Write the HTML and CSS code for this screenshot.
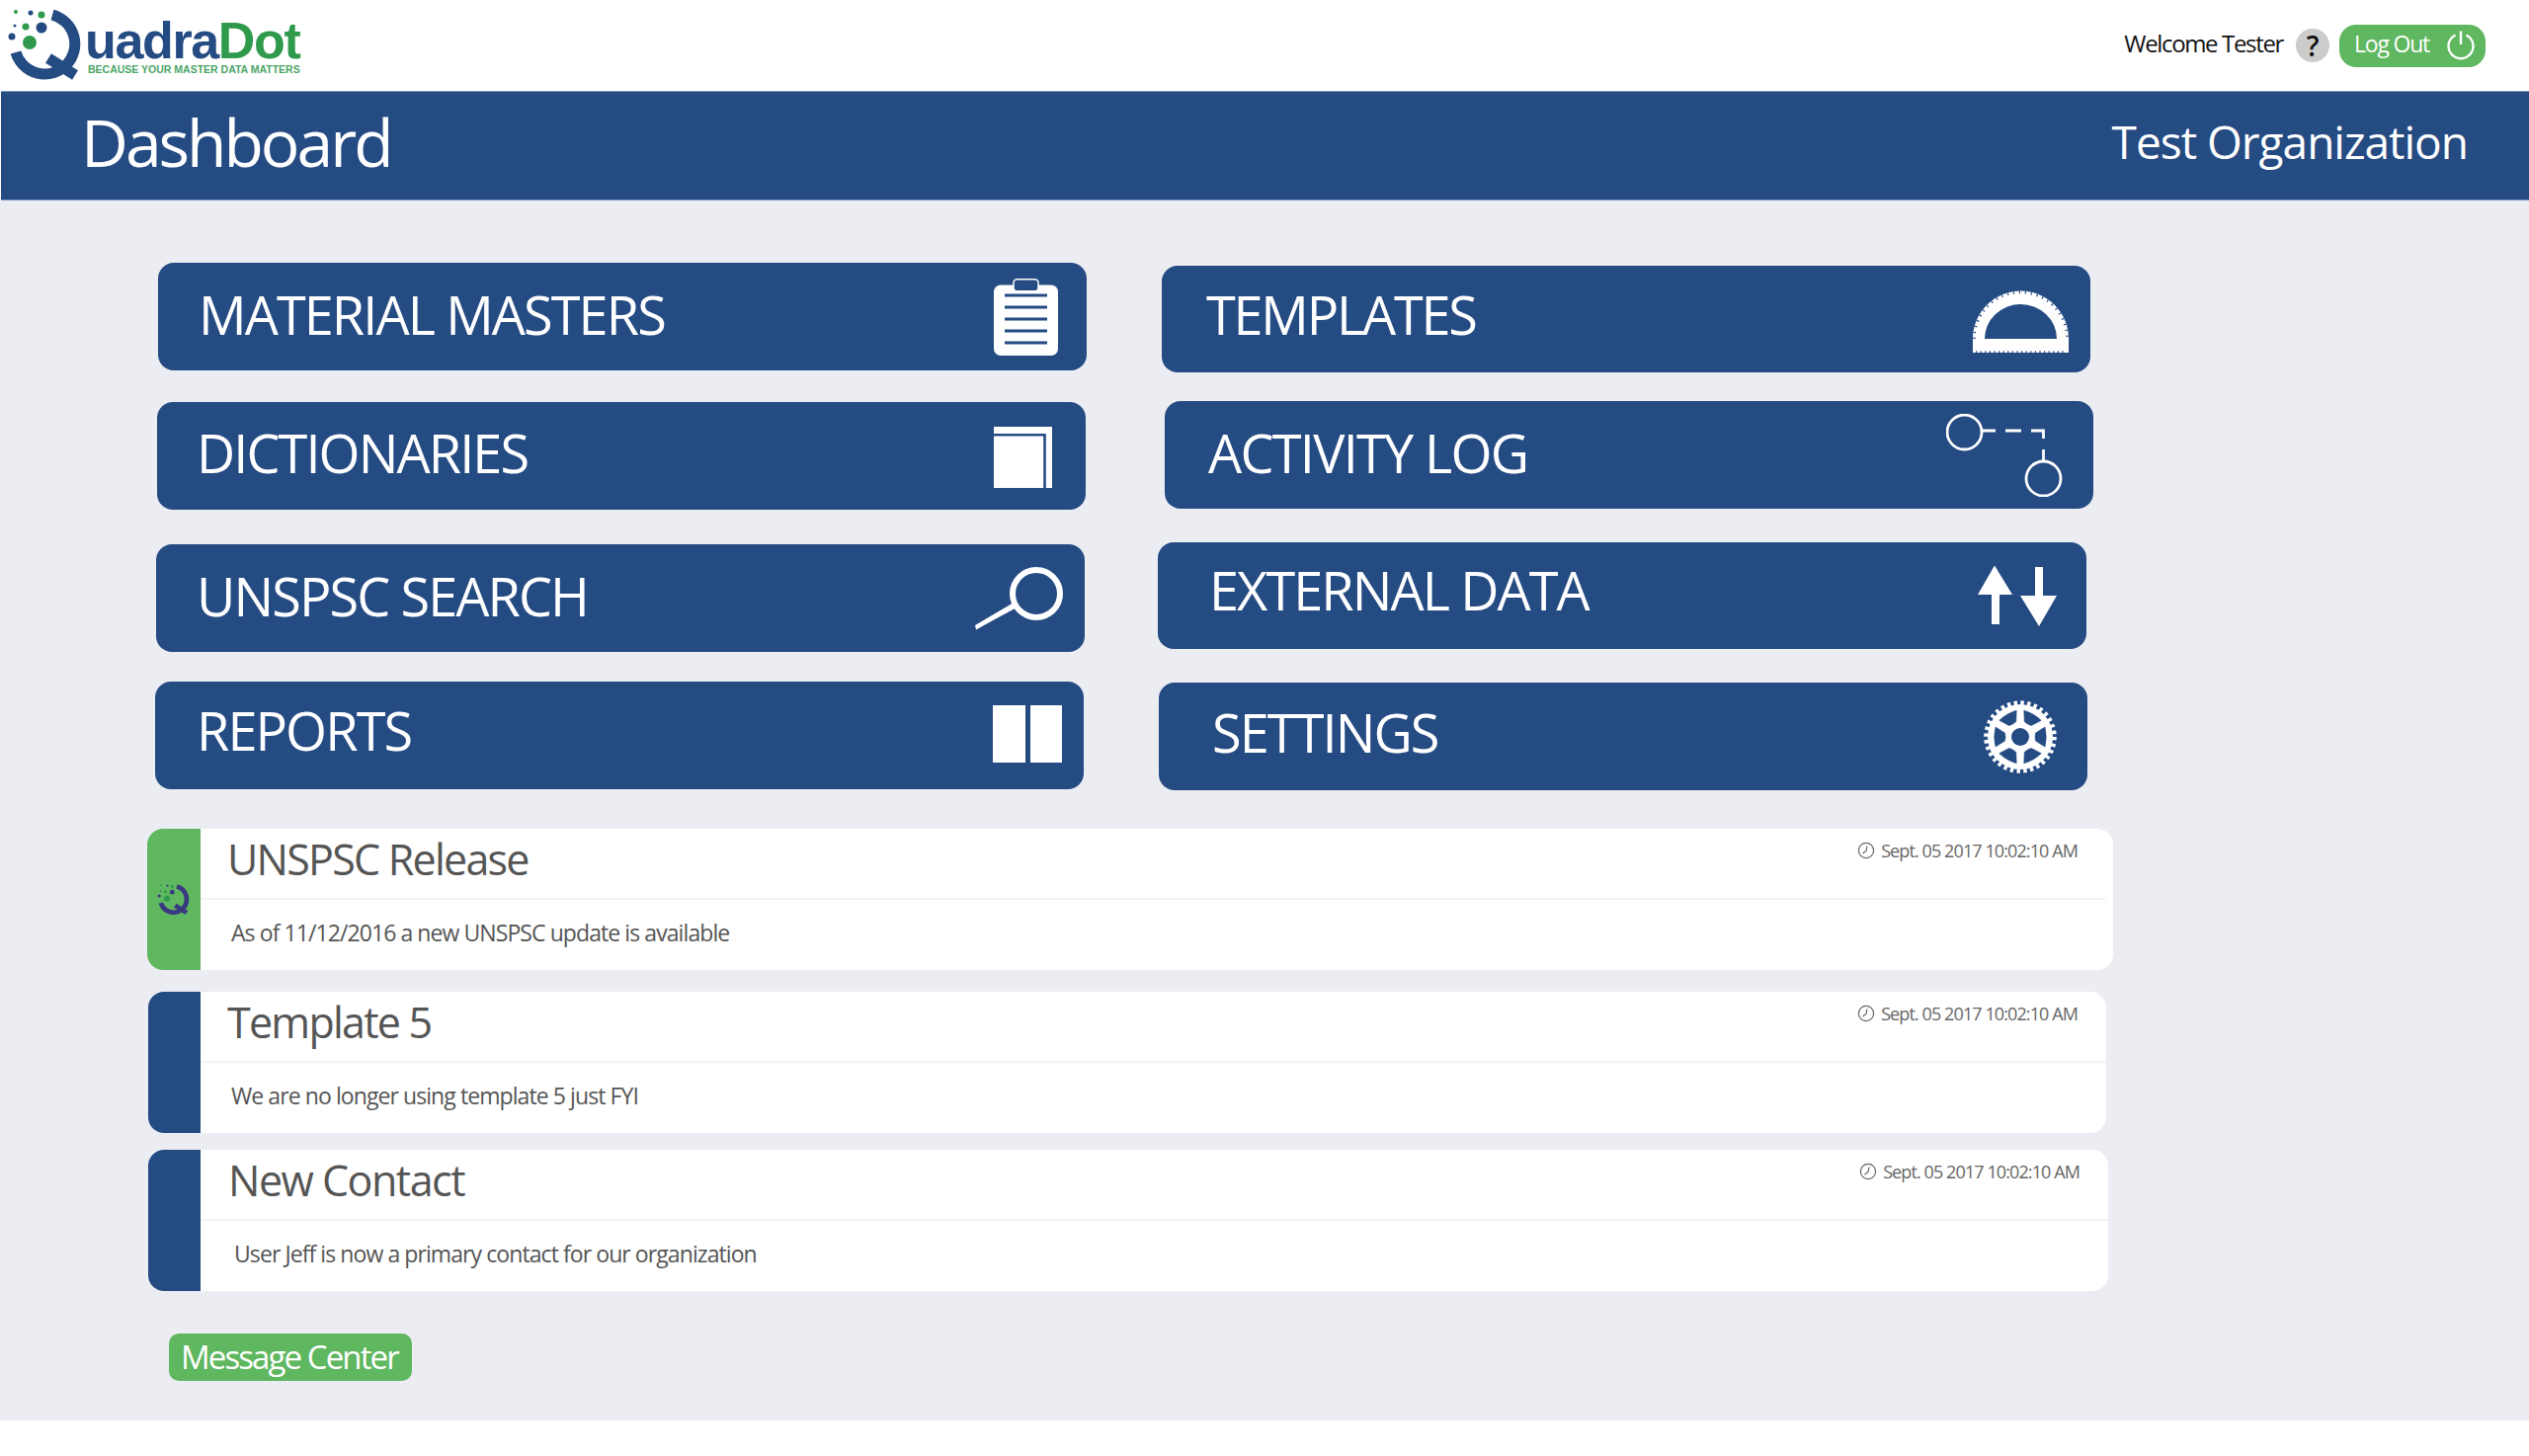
FILE: index.html
```html
<!DOCTYPE html>
<html lang="en">
<head>
<meta charset="utf-8">
<title>Dashboard</title>
<link rel="stylesheet" href="styles.css">
</head>
<body>
<svg class="defs" width="0" height="0" aria-hidden="true">
  <defs>
    <symbol id="q-mark" viewBox="0 0 92 92">
      <path class="q-ring" d="M53 15 A30.5 30.5 0 1 1 16 53"/>
      <path class="q-ring" d="M49 59 L76 76"/>
      <circle class="q-a" cx="30" cy="43" r="7"/><circle class="q-b" cx="42" cy="28" r="5.5"/>
      <circle class="q-a" cx="26" cy="27" r="3.5"/><circle class="q-b" cx="12" cy="37" r="3.5"/>
      <circle class="q-a" cx="42" cy="15" r="3.5"/><circle class="q-b" cx="31" cy="13" r="2.5"/>
      <circle class="q-a" cx="16" cy="12" r="2"/><circle class="q-b" cx="15" cy="26" r="1.5"/>
    </symbol>
    <symbol id="clock" viewBox="0 0 18 18">
      <circle cx="9" cy="9" r="7.6" fill="none" stroke="#666" stroke-width="1.2"/>
      <path d="M10 4.5 L9 9.5 L5.5 12" fill="none" stroke="#666" stroke-width="1.2"/>
    </symbol>
  </defs>
</svg>

<header class="topbar">
  <div class="logo">
    <svg class="logo-mark" viewBox="0 0 92 92"><use href="#q-mark"/></svg>
    <div class="logo-words">
      <div class="logo-name"><span class="logo-blue">uadra</span><span class="logo-green">Dot</span></div>
      <div class="logo-tag">BECAUSE YOUR MASTER DATA MATTERS</div>
    </div>
  </div>
  <div class="userbar">
    <span class="welcome">Welcome Tester</span>
    <span class="help">?</span>
    <a class="logout"><span class="logout-text">Log Out</span>
      <svg class="power" viewBox="0 0 28 30"><path d="M8.500 4.500 A12.500 12.500 0 1 0 19.500 4.500" fill="none" stroke="#fff" stroke-width="2.400"/><path d="M14 0.500 V14" stroke="#fff" stroke-width="2.400"/></svg>
    </a>
  </div>
</header>

<div class="band">
  <h1 class="band-title">Dashboard</h1>
  <div class="band-org">Test Organization</div>
</div>

<main class="content">
  <section class="tiles">
    <div class="tile-col tile-col-left">
      <a class="tile t-material"><span class="tile-label">MATERIAL MASTERS</span>
        <svg class="ico ico-clip" viewBox="0 0 65 78">
          <rect x="0" y="6.500" width="65" height="71.500" rx="7" fill="#fff"/>
          <rect x="20" y="0.800" width="25" height="12" rx="3.500" fill="#254b83" stroke="#fff" stroke-width="1.500"/>
          <path d="M11 17H54M11 29H54M11 41H54M11 53H54M11 65H54" stroke="#254b83" stroke-width="3"/>
        </svg></a>
      <a class="tile t-dict"><span class="tile-label">DICTIONARIES</span>
        <svg class="ico ico-book" viewBox="0 0 59 62">
          <rect width="59" height="62" fill="#fff"/>
          <path d="M0 8.300H51.500V62" fill="none" stroke="#254b83" stroke-width="2.600"/>
        </svg></a>
      <a class="tile t-search"><span class="tile-label">UNSPSC SEARCH</span>
        <svg class="ico ico-search" viewBox="0 0 89 64">
          <circle cx="62" cy="27" r="24" fill="none" stroke="#fff" stroke-width="6"/>
          <path d="M0 59 L39 36 L42 41 L1 63.500Z" fill="#fff"/>
        </svg></a>
      <a class="tile t-reports"><span class="tile-label">REPORTS</span>
        <svg class="ico ico-report" viewBox="0 0 70 58">
          <rect width="33" height="58" fill="#fff"/><rect x="38" width="32" height="58" fill="#fff"/>
        </svg></a>
    </div>
    <div class="tile-col tile-col-right">
      <a class="tile t-templates"><span class="tile-label">TEMPLATES</span>
        <svg class="ico ico-prot" viewBox="0 0 97 63">
          <path d="M0 63V49A48.500 48.500 0 0 1 97 49V63ZM12 49H85A36.500 35 0 0 0 12 49Z" fill="#fff" fill-rule="evenodd"/>
          <path d="M3 62.500H95" stroke="#254b83" stroke-width="2.500" stroke-dasharray="1.200 3.400"/>
          <path d="M1.500 49A47 47 0 0 1 95.500 49" fill="none" stroke="#254b83" stroke-width="2.500" stroke-dasharray="1.200 4.800"/>
        </svg></a>
      <a class="tile t-activity"><span class="tile-label">ACTIVITY LOG</span>
        <svg class="ico ico-flow" viewBox="0 0 118 84">
          <g fill="none" stroke="#fff" stroke-width="2.800">
            <circle cx="18.500" cy="18.500" r="17.500"/><circle cx="98.500" cy="65.500" r="17.500"/>
            <path d="M37 17H50M60 17H76M86 17H98.500V25M98.500 36V48"/>
          </g>
        </svg></a>
      <a class="tile t-external"><span class="tile-label">EXTERNAL DATA</span>
        <svg class="ico ico-arrows" viewBox="0 0 80 62">
          <path d="M17 0.500L35 30H22V60H14V30H0Z" fill="#fff"/>
          <path d="M62 62L43 31H58V2H66V31H80Z" fill="#fff"/>
        </svg></a>
      <a class="tile t-settings"><span class="tile-label">SETTINGS</span>
        <svg class="ico ico-gear" viewBox="-37 -37 74 74">
          <defs><path id="gear-hole" d="M15.500 -4 L25 -10 Q27.500 0 25 10 L15.500 4 Q14.500 0 15.500 -4Z"/></defs>
          <circle r="33" fill="#fff"/>
          <circle r="34" fill="none" stroke="#fff" stroke-width="5.500" stroke-dasharray="3.340 3.340"/>
          <circle r="9" fill="#254b83"/>
          <g fill="#254b83" stroke="#254b83" stroke-width="0.600" stroke-linejoin="round">
            <use href="#gear-hole"/>
            <use href="#gear-hole" transform="rotate(60)"/>
            <use href="#gear-hole" transform="rotate(120)"/>
            <use href="#gear-hole" transform="rotate(180)"/>
            <use href="#gear-hole" transform="rotate(240)"/>
            <use href="#gear-hole" transform="rotate(300)"/>
          </g>
        </svg></a>
    </div>
  </section>

  <section class="messages">
    <article class="msg msg-one">
      <div class="msg-bar msg-bar-green"><svg class="msg-q" viewBox="0 0 92 92"><use href="#q-mark"/></svg></div>
      <div class="msg-main">
        <div class="msg-head"><h2 class="msg-title">UNSPSC Release</h2>
          <span class="msg-date"><svg class="clock" viewBox="0 0 18 18"><use href="#clock"/></svg>Sept. 05 2017 10:02:10 AM</span></div>
        <p class="msg-body">As of 11/12/2016 a new UNSPSC update is available</p>
      </div>
    </article>
    <article class="msg msg-two">
      <div class="msg-bar"></div>
      <div class="msg-main">
        <div class="msg-head"><h2 class="msg-title">Template 5</h2>
          <span class="msg-date"><svg class="clock" viewBox="0 0 18 18"><use href="#clock"/></svg>Sept. 05 2017 10:02:10 AM</span></div>
        <p class="msg-body">We are no longer using template 5 just FYI</p>
      </div>
    </article>
    <article class="msg msg-three">
      <div class="msg-bar"></div>
      <div class="msg-main">
        <div class="msg-head"><h2 class="msg-title">New Contact</h2>
          <span class="msg-date"><svg class="clock" viewBox="0 0 18 18"><use href="#clock"/></svg>Sept. 05 2017 10:02:10 AM</span></div>
        <p class="msg-body">User Jeff is now a primary contact for our organization</p>
      </div>
    </article>
  </section>

  <a class="msg-center">Message Center</a>
</main>
</body>
</html>
```

FILE: styles.css
```css
* { box-sizing: border-box; }
html, body { margin: 0; padding: 0; }
body {
  height: 1474px;
  overflow: hidden;
  background: #fff;
  font-family: "Open Sans", "Noto Sans", sans-serif;
}
.defs { display: block; height: 0; }

.q-ring { fill: none; stroke: var(--q-ring, #254b83); stroke-width: 11; }
.q-a { fill: #2f9a4c; }
.q-b { fill: var(--q-ring, #254b83); }

.topbar {
  height: 92px;
  display: flex;
  justify-content: space-between;
  align-items: center;
  padding-right: 44px;
}
.logo { display: flex; align-items: flex-start; height: 92px; }
.logo-mark { width: 92px; height: 92px; flex: none; }
.logo-words { margin-left: -6px; padding-top: 18px; }
.logo-name {
  font-family: "Liberation Sans", sans-serif;
  font-weight: 700;
  font-size: 52px;
  line-height: 46px;
  letter-spacing: -1.350px;
  white-space: nowrap;
}
.logo-blue { color: #254b83; }
.logo-green { color: #2f9a4c; }
.logo-tag {
  font-family: "Liberation Sans", sans-serif;
  font-weight: 700;
  font-size: 10.500px;
  line-height: 12px;
  color: #4aa566;
  margin: 0 0 0 3px;
  white-space: nowrap;
}
.userbar { display: flex; align-items: center; }
.welcome { font-size: 24px; color: #111; margin: 0 13px 6px 0; letter-spacing: -1.350px; }
.help {
  width: 34px; height: 34px; border-radius: 50%;
  background: #cccccc; color: #111;
  display: flex; align-items: center; justify-content: center;
  font-size: 28px; font-weight: 600; line-height: 34px;
  margin-right: 10px;
}
.logout {
  width: 148px; height: 43px; border-radius: 17px;
  background: #5fb760; color: #fff;
  display: flex; align-items: center; justify-content: space-between;
  padding: 0 11px 0 15px;
  font-size: 23px;
  letter-spacing: -1.200px;
}
.logout-text { margin-bottom: 4px; }
.power { width: 28px; height: 30px; }

.band {
  height: 111px;
  background: #254b83;
  border-top: 1px solid #7f97bb;
  border-bottom: 1px solid #7f97bb;
  margin-left: 1px;
  display: flex;
  justify-content: space-between;
  align-items: center;
  padding: 0 62px 10px 81px;
  color: #fff;
}
.band-title { margin: 0; font-weight: 400; font-size: 66px; line-height: 80px; letter-spacing: -3px; }
.band-org { font-size: 46px; line-height: 60px; letter-spacing: -1px; }

.content {
  height: 1235px;
  background: #ecedf3;
  display: flex;
  flex-direction: column;
  align-items: flex-start;
}
.tiles { display: flex; padding-left: 157px; gap: 72px; }
.tile-col { display: flex; flex-direction: column; align-items: flex-start; }
.tile-col-left { width: 943px; padding-top: 63px; }
.tile-col-right { padding-top: 66px; }

.tile {
  width: 940px;
  height: 109px;
  background: #254b83;
  border-radius: 16px;
  color: #fff;
  display: flex;
  justify-content: space-between;
  align-items: center;
  flex: none;
}
.tile-label { font-size: 54px; line-height: 70px; white-space: nowrap; letter-spacing: -1.900px; }
.ico { display: block; flex: none; }

.t-material  { margin-left: 3px; padding: 0 29px 0 41px; }
.t-material .tile-label { margin-bottom: 6px; }
.t-dict      { margin: 32px 0 0 2px; padding: 0 34px 0 40px; }
.t-dict .tile-label { margin-bottom: 7px; }
.t-dict .ico { margin-top: 3px; }
.t-search    { margin: 35px 0 0 1px; padding: 0 22px 0 41px; }
.t-search .tile-label { margin-bottom: 6px; }
.t-reports   { margin-top: 30px; padding: 0 22px 0 42px; }
.t-reports .tile-label { margin-bottom: 12px; }
.t-reports .ico { margin-top: -3px; }
.t-templates { height: 108px; margin-left: 4px; padding: 0 22px 0 45px; }
.t-templates .tile-label { margin-bottom: 10px; letter-spacing: -2.200px; }
.t-templates .ico { margin-top: 5px; }
.t-activity  { margin: 29px 0 0 7px; padding: 0 31px 0 44px; }
.t-activity .tile-label { margin-bottom: 6px; letter-spacing: -1.700px; }
.t-external  { height: 108px; margin-top: 34px; padding: 0 30px 0 52px; }
.t-external .tile-label { margin-bottom: 13px; }
.t-settings  { margin: 34px 0 0 1px; padding: 0 31px 0 54px; }
.t-settings .tile-label { margin-bottom: 10px; }

.ico-clip { width: 65px; height: 78px; }
.ico-book { width: 59px; height: 62px; }
.ico-search { width: 89px; height: 64px; }
.ico-report { width: 70px; height: 58px; }
.ico-prot { width: 97px; height: 63px; }
.ico-flow { width: 118px; height: 84px; }
.ico-arrows { width: 80px; height: 62px; }
.ico-gear { width: 74px; height: 74px; }

.messages { display: flex; flex-direction: column; padding-left: 150px; margin-top: 39px; }
.msg {
  display: flex;
  height: 143px;
  background: #fff;
  border-radius: 16px;
  overflow: hidden;
  flex: none;
}
.msg-one { width: 1990px; margin-left: -1px; }
.msg-two { width: 1982px; margin-top: 22px; }
.msg-three { width: 1984px; margin-top: 17px; }
.msg-bar {
  width: 53px; flex: none;
  background: #254b83;
  display: flex; align-items: center; justify-content: center;
}
.msg-bar-green { width: 54px; background: #5fb760; }
.msg-q { width: 40px; height: 40px; --q-ring: #3a3a80; }
.msg-main { flex: 1; min-width: 0; }
.msg-head {
  height: 72px;
  border-bottom: 2px solid #f3f3f6;
  display: flex;
  justify-content: space-between;
  align-items: flex-start;
  padding-left: 29px;
  padding-right: 29px;
}
.msg-title { margin: 5px 0 0 -2px; font-weight: 400; font-size: 43px; line-height: 52px; color: #555; letter-spacing: -1.750px; }
.msg-date {
  display: flex; align-items: center;
  font-size: 18px; line-height: 26px; color: #666;
  margin-top: 9px;
  letter-spacing: -0.900px;
}
.clock { width: 18px; height: 18px; margin-right: 6px; }
.msg-body { margin: 18px 0 0 31px; font-size: 23px; line-height: 30px; color: #555; letter-spacing: -0.920px; }
.msg-one .msg-head { margin-right: 7px; padding-right: 29px; }
.msg-two .msg-title { margin-left: -2px; }
.msg-three .msg-title { margin-left: -1px; letter-spacing: -1.500px; }
.msg-three .msg-body { margin-left: 34px; }

.msg-center {
  width: 246px; height: 48px;
  margin: 43px 0 0 171px;
  padding-left: 12px;
  background: #5fb760;
  border-radius: 10px;
  color: #fff;
  font-size: 33px;
  line-height: 48px;
  letter-spacing: -1.900px;
  white-space: nowrap;
}
```
